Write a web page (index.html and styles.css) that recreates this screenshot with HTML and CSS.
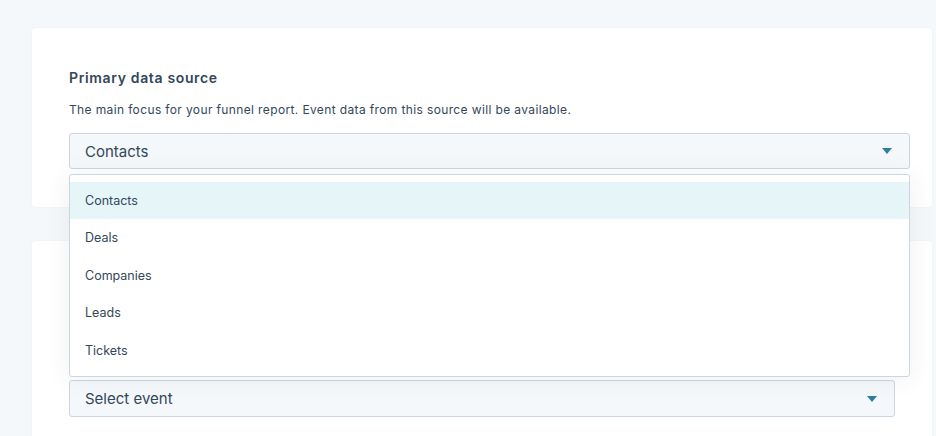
FILE: index.html
```html
<!DOCTYPE html>
<html>
<head>
    <meta charset="utf-8">
    <link rel="stylesheet" href="styles.css">
</head>
<body>
    <div class="page">
        <section class="card first">
            <h2 class="title">Primary data source</h2>
            <p class="help">The main focus for your funnel report. Event data from this source will be available.</p>
            <div class="field">
                <div class="select">
                    <span>Contacts</span>
                    <svg class="caret" width="10" height="6" viewBox="0 0 10 6"><path d="M0 0h10L5 6z"/></svg>
                </div>
                <!-- open menu lies over the next card -->
                <ul class="menu">
                    <li class="active">Contacts</li>
                    <li>Deals</li>
                    <li>Companies</li>
                    <li>Leads</li>
                    <li>Tickets</li>
                </ul>
            </div>
        </section>

        <section class="card second">
            <div class="select">
                <span>Select event</span>
                <svg class="caret" width="10" height="6" viewBox="0 0 10 6"><path d="M0 0h10L5 6z"/></svg>
            </div>
        </section>
    </div>
</body>
</html>
```

FILE: styles.css
```css
html, body {
    margin: 0;
    height: 100%;
    overflow: hidden;
}

body {
    background-color: #f5f8fa;
    font-family: Inter, "Noto Sans", sans-serif;
    color: #33475b;
}

.page {
    display: flex;
    flex-direction: column;
    gap: 34px;
    padding: 28px 4px 0 32px;
}

.card {
    background-color: #fff;
    border-radius: 3px;
    box-shadow: 0 0 1px rgba(45, 62, 80, 0.12);
}

.card.first {
    padding: 40px 22px 38px 37px;
}

.card.second {
    padding: 139px 37px 40px 37px;
}

.title {
    margin: 0;
    font-size: 14px;
    line-height: 20px;
    font-weight: 600;
    letter-spacing: 0.65px;
}

.help {
    margin: 13px 0 14px;
    font-size: 12px;
    line-height: 18px;
    letter-spacing: 0.37px;
}

.field {
    position: relative;
}

.select {
    display: flex;
    align-items: center;
    justify-content: space-between;
    height: 36px;
    box-sizing: border-box;
    padding: 0 17px 0 15px;
    background-color: #f5f8fa;
    border: 1px solid #cbd6e2;
    border-radius: 3px;
    font-size: 15px;
}

.card.second .select {
    height: 37px;
}

.caret {
    fill: #2d7f9c;
}

.menu {
    position: absolute;
    top: 41px;
    left: 0;
    right: 0;
    margin: 0;
    padding: 7px 0 7px;
    list-style: none;
    background-color: #fff;
    border: 1px solid #cbd6e2;
    border-radius: 3px;
    box-shadow: 0 1px 24px rgba(45, 62, 80, 0.08);
    font-size: 12.5px;
}

.menu li {
    height: 37.4px;
    line-height: 37.4px;
    padding-left: 15px;
}

.menu li.active {
    background-color: #e5f5f8;
}
```
